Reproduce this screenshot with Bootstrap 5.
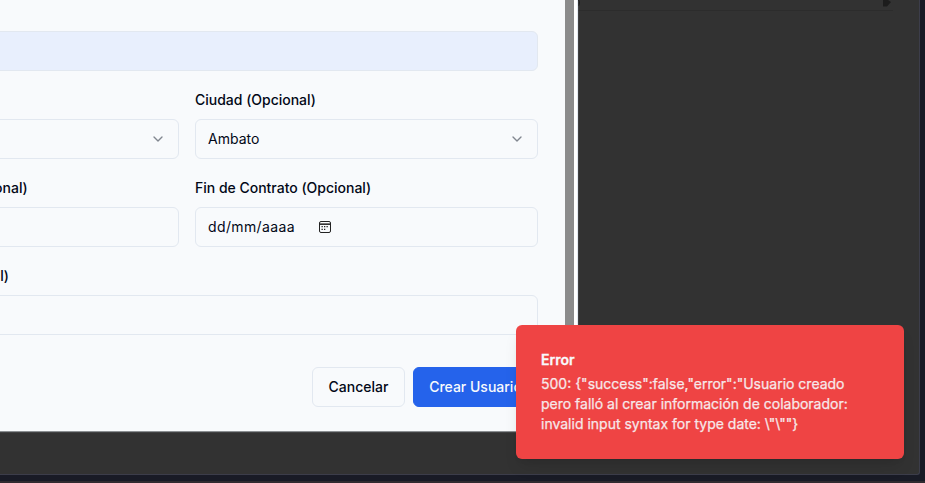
<!DOCTYPE html>
<html lang="es">
<head>
<meta charset="utf-8">
<meta name="viewport" content="width=device-width, initial-scale=1">
<title>Crear Usuario</title>
<link href="https://cdn.jsdelivr.net/npm/bootstrap@5.3.0/dist/css/bootstrap.min.css" rel="stylesheet">
<style>
  body { width: 925px; height: 483px; background: #191b26; font: 14px/20px Inter, sans-serif; color: #020817; }
  .backdrop-page { width: 920px; height: 475px; background: #323232; border-right: 1px solid #3c3d4a; border-bottom: 1px solid #3c3d4a; border-bottom-right-radius: 3px; }
  .strip { height: 11px; margin-left: 578px; width: 315px; border-bottom: 1px solid #2c2c2c; }
  .footer-line { height: 2px; margin-top: 6px; background: #302b30; }
  .dialog-box { width: 578px; height: 431px; background: #f8fafc; border-right: 1px solid #e2e8f0; box-shadow: 0 1px 1px #8b8f92; }
  .form-area { width: 702px; margin-left: -164px; padding-top: 31px; }
  .scroll-track { width: 12px; margin-left: auto; background: #fff; }
  .scroll-thumb { width: 9px; height: 100%; background: #8b8b8b; }
  .field { height: 40px; border: 1px solid #e2e8f0; border-radius: 6px; padding: 0 12px; }
  .autofilled { background: #e8effd; }
  .caption { height: 24px; line-height: 25px; margin-bottom: 8px; font-weight: 500; white-space: nowrap; letter-spacing: -.01px; }
  .caption-end { width: 173px; }
  .act { height: 40px; padding: 0 15px; border-radius: 6px; font-size: 14px; font-weight: 500; line-height: 20px; white-space: nowrap; }
  .act-cancel { width: 93px; color: #020817; background: #f8fafc; border: 1px solid #e2e8f0; }
  .act-create { width: 125px; color: #f8fafc; background: #2563eb; border: 1px solid #2563eb; }
  .date-text { letter-spacing: .38px; width: 109px; }
  .alert-toast { left: 516px; top: 325px; width: 388px; height: 134px; padding: 25px 32px 0 25px; border-radius: 6px; background: #ef4444; color: #f8fafc; box-shadow: 0 10px 15px -3px rgba(0,0,0,.1), 0 4px 6px -4px rgba(0,0,0,.1); }
  .toast-title { font-weight: 600; margin-bottom: 4px; -webkit-text-stroke: .3px; }
  .toast-text { opacity: .9; white-space: nowrap; -webkit-text-stroke: .25px; }
</style>
<script defer src="https://cdn.jsdelivr.net/npm/bootstrap@5.3.0/dist/js/bootstrap.bundle.min.js"></script>
</head>
<body class="position-relative overflow-hidden m-0">
<div class="backdrop-page">
  <div class="strip d-flex justify-content-between">
    <svg width="3" height="8"><path d="M0 0h1q2 2 0 6H0z" fill="#1c1c1c"/></svg>
    <svg width="10" height="8"><path d="M0 0h5l3 2-4 4.5H0z" fill="#1c1c1c"/></svg>
  </div>
</div>
<div class="footer-line"></div>

<main class="dialog-box position-absolute top-0 start-0 d-flex overflow-hidden">
  <form class="form-area flex-shrink-0 d-flex flex-column gap-3">
    <div class="field autofilled"></div>
    <div class="row gx-3">
      <div class="col-6">
        <div class="caption"></div>
        <div class="field d-flex align-items-center justify-content-end">
          <svg width="16" height="16" viewBox="0 0 24 24" fill="none" stroke="#81868f" stroke-width="2" stroke-linecap="round" stroke-linejoin="round"><path d="m6 9 6 6 6-6"/></svg>
        </div>
      </div>
      <div class="col-6">
        <div class="caption">Ciudad (Opcional)</div>
        <div class="field d-flex align-items-center justify-content-between">
          <span>Ambato</span>
          <svg width="16" height="16" viewBox="0 0 24 24" fill="none" stroke="#81868f" stroke-width="2" stroke-linecap="round" stroke-linejoin="round"><path d="m6 9 6 6 6-6"/></svg>
        </div>
      </div>
    </div>
    <div class="row gx-3">
      <div class="col-6">
        <div class="caption">Inicio de Contrato (Opcional)</div>
        <div class="field"></div>
      </div>
      <div class="col-6">
        <div class="caption">Fin de Contrato (Opcional)</div>
        <div class="field d-flex align-items-center">
          <span class="date-text">dd/mm/aaaa</span>
          <svg width="16" height="16" viewBox="0 0 16 16"><rect x="2.5" y="2.5" width="11" height="11" rx="1.5" fill="none" stroke="#222"/><path d="M3 4h10v1.5H3z" fill="#777"/><path d="M3 5.5h10" stroke="#333"/><path d="M7 7h1.3v1.3H7zm2.5 0h1.3v1.3H9.5zM4.5 7h1.3v1.3H4.5zm0 2.7h1.3V11H4.5zM7 9.7h1.3V11H7z" fill="#222"/></svg>
        </div>
      </div>
    </div>
    <div>
      <div class="caption caption-end text-end">Cargo (Opcional)</div>
      <div class="field"></div>
    </div>
    <div class="d-flex justify-content-end gap-2 pt-3">
      <button type="button" class="btn act act-cancel">Cancelar</button>
      <button type="button" class="btn act act-create">Crear Usuario</button>
    </div>
  </form>
  <div class="scroll-track"><div class="scroll-thumb"></div></div>
</main>

<div class="alert-toast position-absolute" role="alert">
  <div class="toast-title">Error</div>
  <div class="toast-text">500: {"success":false,"error":"Usuario creado<br>pero falló al crear información de colaborador:<br>invalid input syntax for type date: \"\""}</div>
</div>
</body>
</html>
